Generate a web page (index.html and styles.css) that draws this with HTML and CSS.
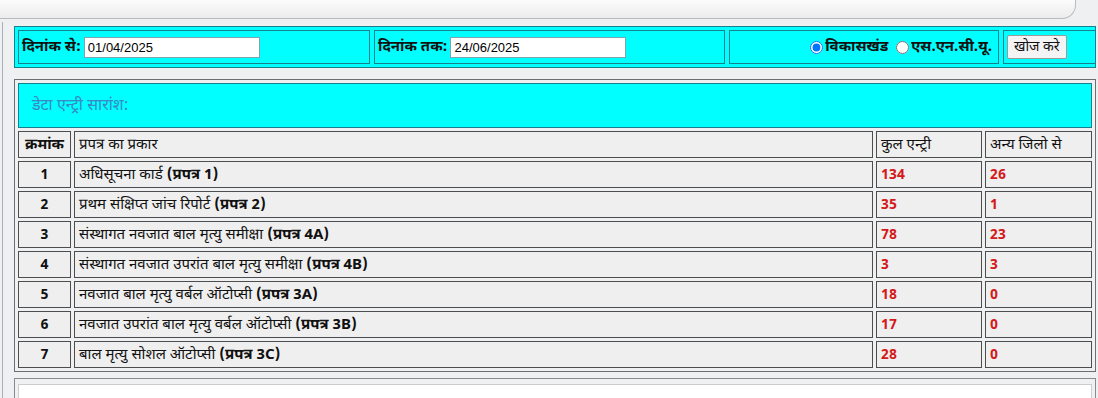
FILE: index.html
```html
<!DOCTYPE html>
<html lang="hi">
<head>
<meta charset="utf-8">
<title>डेटा एन्ट्री सारांश</title>
<link rel="stylesheet" href="styles.css">
</head>
<body>
<div class="topbar"></div>
<div class="wrap">
  <div class="filter">
    <div class="fcell">
      <label class="flabel">दिनांक से:</label>
      <input class="date" type="text" value="01/04/2025">
    </div>
    <div class="fcell">
      <label class="flabel">दिनांक तक:</label>
      <input class="date" type="text" value="24/06/2025">
    </div>
    <div class="fcell fradio">
      <label class="ropt"><input type="radio" name="t" checked>विकासखंड</label>
      <label class="ropt"><input type="radio" name="t">एस.एन.सी.यू.</label>
    </div>
    <div class="fcell fbtn">
      <button class="btn" type="button">खोज करे</button>
    </div>
  </div>

  <table class="summary">
    <colgroup>
      <col class="c1"><col><col class="c3"><col class="c4">
    </colgroup>
    <tr><td colspan="4" class="title">डेटा एन्ट्री सारांश:</td></tr>
    <tr class="head">
      <td class="num">क्रमांक</td>
      <td>प्रपत्र का प्रकार</td>
      <td>कुल एन्ट्री</td>
      <td>अन्य जिलो से</td>
    </tr>
    <tr><td class="num">1</td><td>अधिसूचना कार्ड <b>(प्रपत्र 1)</b></td><td class="red">134</td><td class="red">26</td></tr>
    <tr><td class="num">2</td><td>प्रथम संक्षिप्त जांच रिपोर्ट <b>(प्रपत्र 2)</b></td><td class="red">35</td><td class="red">1</td></tr>
    <tr><td class="num">3</td><td>संस्थागत नवजात बाल मृत्यु समीक्षा <b>(प्रपत्र 4A)</b></td><td class="red">78</td><td class="red">23</td></tr>
    <tr><td class="num">4</td><td>संस्थागत नवजात उपरांत बाल मृत्यु समीक्षा <b>(प्रपत्र 4B)</b></td><td class="red">3</td><td class="red">3</td></tr>
    <tr><td class="num">5</td><td>नवजात बाल मृत्यु वर्बल ऑटोप्सी <b>(प्रपत्र 3A)</b></td><td class="red">18</td><td class="red">0</td></tr>
    <tr><td class="num">6</td><td>नवजात उपरांत बाल मृत्यु वर्बल ऑटोप्सी <b>(प्रपत्र 3B)</b></td><td class="red">17</td><td class="red">0</td></tr>
    <tr><td class="num">7</td><td>बाल मृत्यु सोशल ऑटोप्सी <b>(प्रपत्र 3C)</b></td><td class="red">28</td><td class="red">0</td></tr>
  </table>

  <div class="bottom">
    <div class="bottom-inner"></div>
  </div>
</div>
</body>
</html>
```

FILE: styles.css
```css
* { box-sizing: border-box; }
html, body {
  margin: 0;
  padding: 0;
  background: #eef0f1;
  font-family: "Noto Sans Devanagari", "Noto Sans", "Open Sans", sans-serif;
  color: #111;
  overflow: hidden;
}
.topbar {
  width: 1076px;
  height: 19px;
  background: linear-gradient(#fbfbfb, #ececec);
  border-bottom: 1px solid #b9bcbf;
  border-right: 1px solid #b9bcbf;
  border-bottom-right-radius: 14px;
}
.wrap {
  margin: 3px 0 0 2px;
  border-left: 1px solid #a9b0b8;
  padding: 4px 0 0 11px;
  height: 380px;
}
.filter {
  width: 1082px;
  display: grid;
  grid-template-columns: 352px 351px 270px 93px;
  column-gap: 4px;
  padding: 3px;
  background: #00ffff;
  border: 1px solid #17808c;
}
.fcell {
  height: 34px;
  border: 1px solid #17808c;
  display: flex;
  align-items: center;
  padding-left: 3px;
}
.flabel {
  font-weight: 700;
  font-size: 15px;
  margin-right: 3px;
}
.date {
  width: 176px;
  height: 21px;
  border: 1px solid #7aa6b0;
  font-family: "Liberation Sans", Arial, sans-serif;
  font-size: 13px;
  padding: 1px 3px;
  color: #000;
  background: #fff;
}
.fradio {
  justify-content: flex-end;
  padding-right: 6px;
}
.ropt {
  display: flex;
  align-items: center;
  font-weight: 700;
  font-size: 15px;
}
.ropt + .ropt { margin-left: 8px; }
.ropt input {
  margin: 0 2px 0 0;
  width: 13px;
  height: 13px;
}
.fbtn { padding-left: 3px; }
.btn {
  height: 24px;
  padding: 0 6px;
  font-family: "Noto Sans Devanagari", "Noto Sans", sans-serif;
  font-size: 14px;
  color: #111;
  background: #f4f4f4;
  border: 1px solid #9a9a9a;
  border-radius: 2px;
}
.summary {
  margin-top: 11px;
  width: 1082px;
  border: 1px solid #6e6e6e;
  border-spacing: 3px;
  background: #eef0f1;
  font-size: 15px;
}
.summary col.c1 { width: 53px; }
.summary col.c3 { width: 106px; }
.summary col.c4 { width: 107px; }
.summary td {
  border: 1px solid #4d4d4d;
  background: #efefef;
  height: 27px;
  padding: 3px 4px 0;
  line-height: 1.1;
  vertical-align: middle;
}
.summary td.title {
  height: 45px;
  background: #00ffff;
  border-color: #17808c;
  color: #3a88c4;
  font-size: 16px;
  padding-left: 13px;
}
.summary td.num {
  text-align: center;
  font-weight: 700;
  font-size: 14px;
}
.summary tr.head td.num { font-size: 15px; }
.summary td.red {
  color: #d41a1a;
  font-weight: 700;
  font-size: 14px;
}
.bottom {
  margin-top: 6px;
  width: 1082px;
  border: 1px solid #8a8a8a;
  padding: 5px 3px 0;
}
.bottom-inner {
  height: 40px;
  background: #fff;
  border: 1px solid #ccc;
}
```
